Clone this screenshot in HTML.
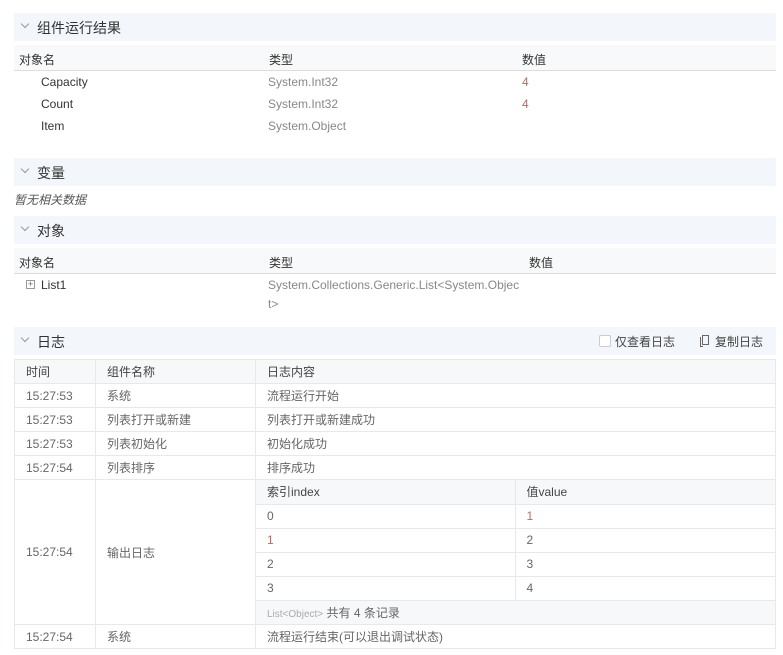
<!DOCTYPE html>
<html><head><meta charset="utf-8"><style>
*{margin:0;padding:0;box-sizing:border-box}
body{width:783px;height:655px;background:#fff;font-family:"Liberation Sans","Noto Sans CJK SC",sans-serif;font-size:12px;color:#333;position:relative;overflow:hidden}
.a{position:absolute;white-space:nowrap}
.hd{position:absolute;left:14px;width:762px;height:28px;background:#f3f6fa}
.hd span{position:absolute;left:23px;top:5px;font-size:14px;color:#333}
.hd i{position:absolute;left:8px;top:8px;width:6px;height:6px;border-right:1px solid #999;border-bottom:1px solid #999;transform:rotate(45deg)}
.th{position:absolute;left:14px;width:762px;height:26px;background:#f8f9fa;border-bottom:1px solid #ddd}
.g{color:#888}.r{color:#a87070}
table{position:absolute;border-collapse:collapse;left:14px;top:359px;width:762px}
td{border:1px solid #e6e8eb;height:24px;padding:0 0 0 11px;color:#666;vertical-align:middle}
tr.h td{background:#f7f8fa;color:#444}
.in{position:static;width:100%;border:none}
.in td{border:none;border-bottom:1px solid #e6e8eb}
.in td+td{border-left:1px solid #e6e8eb}
</style></head><body>
<div class="hd" style="top:13px"><i></i><span>组件运行结果</span></div>
<div class="th" style="top:45px"></div>
<div class="a" style="left:19px;top:51px">对象名</div><div class="a" style="left:269px;top:51px">类型</div><div class="a" style="left:522px;top:51px">数值</div>
<div class="a" style="left:41px;top:75px">Capacity</div><div class="a g" style="left:268px;top:75px">System.Int32</div><div class="a r" style="left:522px;top:75px">4</div>
<div class="a" style="left:41px;top:97px">Count</div><div class="a g" style="left:268px;top:97px">System.Int32</div><div class="a r" style="left:522px;top:97px">4</div>
<div class="a" style="left:41px;top:119px">Item</div><div class="a g" style="left:268px;top:119px">System.Object</div>
<div class="hd" style="top:158px"><i></i><span>变量</span></div>
<div class="a" style="left:14px;top:191px;font-style:italic;color:#555">暂无相关数据</div>
<div class="hd" style="top:216px"><i></i><span>对象</span></div>
<div class="th" style="top:248px"></div>
<div class="a" style="left:19px;top:254px">对象名</div><div class="a" style="left:269px;top:254px">类型</div><div class="a" style="left:529px;top:254px">数值</div>
<div class="a" style="left:26px;top:280px;width:9px;height:9px;border:1px solid #999;font-size:9px;line-height:7px;text-align:center;color:#666">+</div>
<div class="a" style="left:41px;top:278px">List1</div>
<div class="a g" style="left:268px;top:278px">System.Collections.Generic.List&lt;System.Objec</div>
<div class="a g" style="left:268px;top:297px">t&gt;</div>
<div class="hd" style="top:327px"><i></i><span>日志</span>
<div class="a" style="left:585px;top:8px;width:12px;height:12px;border:1px solid #ccc;background:#fff;border-radius:2px"></div>
<div class="a" style="left:601px;top:6px;color:#444">仅查看日志</div>
<div class="a" style="left:688px;top:8px;width:7px;height:10px;border:1px solid #666"></div>
<div class="a" style="left:686px;top:10px;width:3px;height:10px;border-left:1px solid #666;border-bottom:1px solid #666"></div>
<div class="a" style="left:701px;top:6px;color:#444">复制日志</div></div>
<table>
<tr class="h"><td style="width:81px">时间</td><td style="width:160px">组件名称</td><td>日志内容</td></tr>
<tr><td>15:27:53</td><td>系统</td><td>流程运行开始</td></tr>
<tr><td>15:27:53</td><td>列表打开或新建</td><td>列表打开或新建成功</td></tr>
<tr><td>15:27:53</td><td>列表初始化</td><td>初始化成功</td></tr>
<tr><td>15:27:54</td><td>列表排序</td><td>排序成功</td></tr>
<tr><td>15:27:54</td><td>输出日志</td><td style="padding:0">
<table class="in">
<tr class="h"><td style="width:259px">索引index</td><td>值value</td></tr>
<tr><td>0</td><td class="r">1</td></tr>
<tr><td class="r">1</td><td>2</td></tr>
<tr><td>2</td><td>3</td></tr>
<tr><td>3</td><td>4</td></tr>
<tr><td colspan="2" style="background:#f7f8fa;border-bottom:none;height:24px"><span style="font-size:10px;color:#aaa">List&lt;Object&gt;</span> 共有 4 条记录</td></tr>
</table></td></tr>
<tr><td>15:27:54</td><td>系统</td><td>流程运行结束(可以退出调试状态)</td></tr>
</table>
</body></html>
